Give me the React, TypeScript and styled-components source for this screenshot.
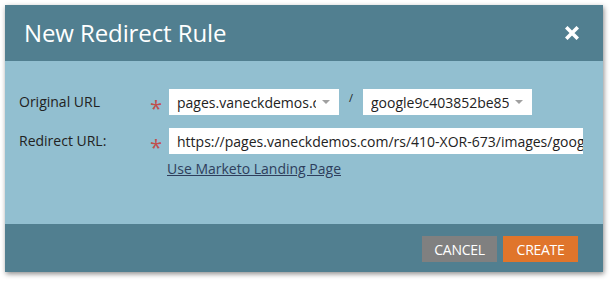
import styled, { createGlobalStyle } from 'styled-components';

const Global = createGlobalStyle`
    body {
        margin: 0;
        background: #ffffff;
        font-family: 'Open Sans', 'Liberation Sans', sans-serif;
    }
`;

const App = () => {
    return (
        <Page>
            <Global />
            <Dialog>
                <Header>
                    <Title>New Redirect Rule</Title>
                    <Close>
                        <svg width="14" height="14" viewBox="0 0 14 14">
                            <path d="M2.5 2.5 L11.5 11.5 M11.5 2.5 L2.5 11.5" stroke="#fff" strokeWidth="3.6" strokeLinecap="square" />
                        </svg>
                    </Close>
                </Header>
                <Body>
                    <Row>
                        <Label>Original URL</Label>
                        <Required>*</Required>
                        <Select width={170}>
                            <SelectText>pages.vaneckdemos.com</SelectText>
                            <Caret />
                        </Select>
                        <Slash>/</Slash>
                        <Select width={169}>
                            <SelectText>google9c403852be85</SelectText>
                            <Caret />
                        </Select>
                    </Row>
                    <Row>
                        <Label>Redirect URL:</Label>
                        <Required>*</Required>
                        <Input>https://pages.vaneckdemos.com/rs/410-XOR-673/images/google9c403852be85.html</Input>
                    </Row>
                    <LinkRow>
                        <Link href="#">Use Marketo Landing Page</Link>
                    </LinkRow>
                </Body>
                <Footer>
                    <Button kind="cancel">CANCEL</Button>
                    <Button kind="create">CREATE</Button>
                </Footer>
            </Dialog>
        </Page>
    );
};

export default App;

const Page = styled.div`
    padding: 5px 8px 9px 5px;
`;

const Dialog = styled.div`
    width: 598px;
    box-shadow: 1px 2px 5px rgba(0, 0, 0, 0.45);
`;

const Header = styled.div`
    height: 56px;
    background: #517f90;
    display: flex;
    align-items: center;
    justify-content: space-between;
    padding: 0 24px 0 19px;
    box-sizing: border-box;
`;

const Title = styled.div`
    color: #ffffff;
    font-size: 24px;
    letter-spacing: -0.1px;
    padding-bottom: 1px;
`;

const Close = styled.div`
    display: flex;
`;

const Body = styled.div`
    background: #92bfd0;
    height: 163px;
    padding: 28px 0 0 14px;
    box-sizing: border-box;
    display: flex;
    flex-direction: column;
    gap: 13px;
`;

const Row = styled.div`
    display: flex;
    align-items: center;
    height: 26px;
`;

const Label = styled.div`
    width: 131px;
    font-size: 14px;
    color: #222;
    padding-bottom: 2px;
`;

const Required = styled.div`
    width: 19px;
    color: #c0504d;
    font-size: 22px;
    line-height: 22px;
    padding-top: 10px;
`;

const Select = styled.div<{ width: number }>`
    width: ${(p) => p.width}px;
    height: 26px;
    background: #fff;
    display: flex;
    align-items: center;
    padding: 0 5px 0 8px;
    box-sizing: border-box;
    gap: 6px;
`;

const SelectText = styled.div`
    flex: 1;
    overflow: hidden;
    white-space: nowrap;
    font-size: 14px;
    color: #222;
`;

const Caret = styled.div`
    width: 0;
    height: 0;
    margin-right: 4px;
    border-left: 4.5px solid transparent;
    border-right: 4.5px solid transparent;
    border-top: 4.5px solid #a0a0a0;
`;

const Slash = styled.div`
    width: 24px;
    text-align: center;
    font-size: 11px;
    color: #222;
    padding-bottom: 9px;
`;

const Input = styled.div`
    width: 414px;
    height: 26px;
    background: #fff;
    display: flex;
    align-items: center;
    padding: 0 6px 0 8px;
    box-sizing: border-box;
    overflow: hidden;
    white-space: nowrap;
    font-size: 14px;
    color: #222;
`;

const LinkRow = styled.div`
    padding-left: 148px;
    margin-top: -10px;
`;

const Link = styled.a`
    font-size: 14px;
    color: #2e3e5c;
    text-decoration: underline;
`;

const Footer = styled.div`
    height: 48px;
    background: #517f90;
    display: flex;
    justify-content: flex-end;
    align-items: flex-start;
    gap: 6px;
    padding: 12px 25px 0 0;
    box-sizing: border-box;
`;

const Button = styled.button<{ kind: 'cancel' | 'create' }>`
    height: 26px;
    border: none;
    padding: 0 10px;
    width: 75px;
    background: ${(p) => (p.kind === 'cancel' ? '#808080' : '#e0752b')};
    color: #fff;
    font-family: 'Open Sans', 'Liberation Sans', sans-serif;
    font-size: 14px;
    letter-spacing: -0.3px;
`;
